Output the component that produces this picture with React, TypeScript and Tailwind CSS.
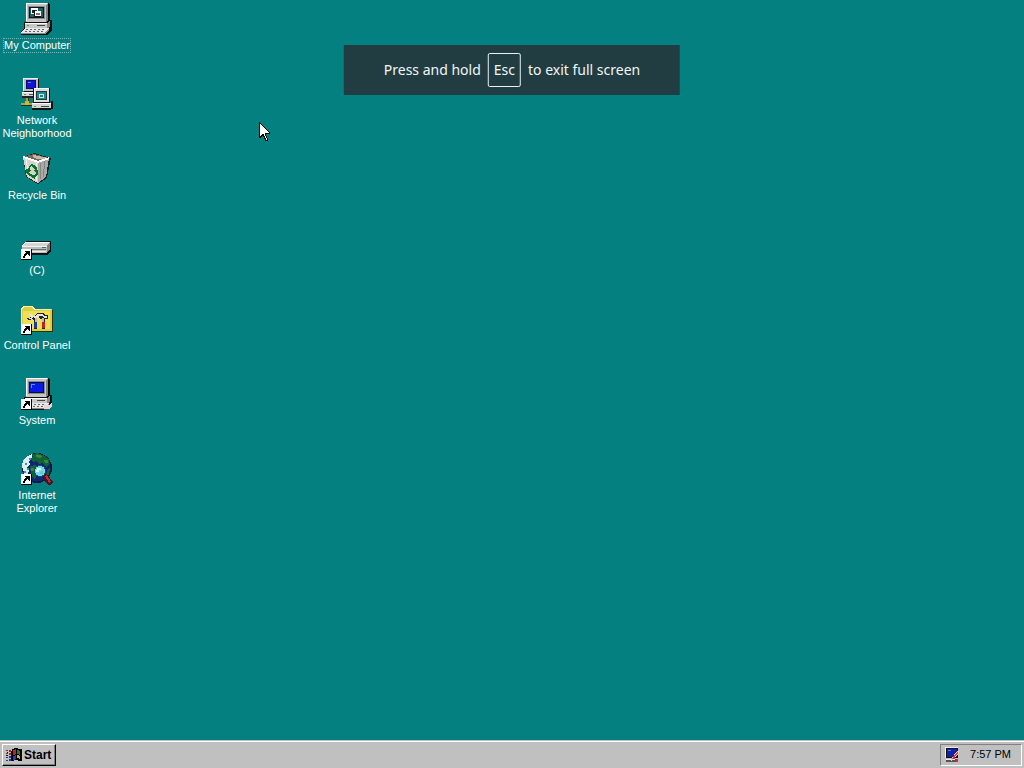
import type { ReactNode } from 'react';

function Sprite({ children }: { children: ReactNode }) {
  return (
    <svg className="size-8 shrink-0" viewBox="0 0 32 32" shapeRendering="crispEdges" aria-hidden="true">
      {children}
    </svg>
  );
}

function ShortcutArrow() {
  return (
    <g>
      <path d="M0 21h11v11H0z" fill="#000" />
      <path d="M0 21h10v10H0z" fill="#fff" />
      <path d="M4 23h5v5H8v-1H7v-1H6v1H5v1H4v2H2v-2h1v-2h1v-1h1v-1H4z" fill="#000" />
    </g>
  );
}

function Workstation({ screen }: { screen: ReactNode }) {
  return (
    <g>
      <path d="M7 0h20l2 1v17l-2 2H6z" fill="#000" />
      <path d="M5 1l2-1h20v17l-2 2H5z" fill="#c6c6c6" />
      <path d="M5 0h21v1H6v17H5z" fill="#fff" />
      <path d="M25 2l2-1v16l-2 2z" fill="#808080" />
      <path d="M7 3h17v13H7z" fill="#8b8b8b" />
      <path d="M8 4h15v11H8z" fill="#0a1226" />
      {screen}
      <path d="M3 19h24l3-2 1 1v7l-3 3H3z" fill="#111" />
      <path d="M4 20h22v5H4z" fill="#c8c8c8" />
      <path d="M4 20h22v1H4z" fill="#fff" />
      <path d="M26 20l3-2v6l-3 2z" fill="#8a8a8a" />
      <path d="M16 22h8v1h-8z" fill="#444" />
      <path d="M6 22h2v1H6z" fill="#42a442" />
      <path d="M3 25h25l3-1v3l-4 5H0v-3z" fill="#111" />
      <path d="M4 25h24l-4 5H0z" fill="#e8e8e8" />
      <path d="M0 30h24l4-5v2l-4 4H0z" fill="#8a8a8a" />
      <path d="M5 26h2v1H5zm4 0h2v1H9zm4 0h2v1h-2zm4 0h2v1h-2zm4 0h2v1h-2zM4 28h2v1H4zm4 0h2v1H8zm4 0h2v1h-2zm4 0h2v1h-2zm4 0h2v1h-2z" fill="#666" />
    </g>
  );
}

function MyComputerIcon() {
  return (
    <Sprite>
      <Workstation
        screen={
          <g>
            <path d="M9 5h13v9H9z" fill="#1b6060" />
            <path d="M10 5h7v6h-7z" fill="#fff" />
            <path d="M11 7h5v3h-5z" fill="#222" />
            <path d="M13 8h7v6h-7z" fill="#111" />
            <path d="M14 8h6v5h-6z" fill="#fff" />
            <path d="M15 10h4v2h-4z" fill="#777" />
          </g>
        }
      />
    </Sprite>
  );
}

function NetworkIcon() {
  return (
    <Sprite>
      <path d="M2 0h15v13H2z" fill="#eee" />
      <path d="M17 1h1v13H3v-1h14z" fill="#111" />
      <path d="M3 1h14v12H3z" fill="#bbb" />
      <path d="M5 2h10v9H5z" fill="#071060" />
      <path d="M6 3h8v7H6z" fill="#1212dc" />
      <path d="M7 4h3v1H7z" fill="#7277ff" />
      <path d="M1 14h17v5H1z" fill="#d8d8d8" />
      <path d="M1 14h17v1H1z" fill="#fff" />
      <path d="M1 18h17v2H1zM18 12h1v7h-1z" fill="#222" />
      <path d="M3 16h2v1H3z" fill="#43a543" />
      <path d="M8 16h5v1H8z" fill="#555" />
      <path d="M5 20h2v5h6v2H0v-2h5z" fill="#ada542" />
      <path d="M0 27h13v1H0zM7 20h1v5H7z" fill="#302b10" />
      <path d="M4 23h4v4H4z" fill="#c5bb43" />
      <path d="M12 10h17v15H12z" fill="#111" />
      <path d="M13 10h15v14H13z" fill="#ddd" />
      <path d="M13 10h15v1H14v13h-1z" fill="#fff" />
      <path d="M15 13h11v9H15z" fill="#28363a" />
      <path d="M16 14h9v7h-9z" fill="#188c8c" />
      <path d="M18 16h5v4h-5z" fill="#d0e5e5" />
      <path d="M19 17h3v2h-3z" fill="#257b7b" />
      <path d="M11 25h19v6H11z" fill="#d5d5d5" />
      <path d="M11 25h19v1H11z" fill="#fff" />
      <path d="M11 30h19v2H11zM30 23h2v8h-2z" fill="#111" />
      <path d="M20 28h8v1h-8z" fill="#444" />
      <path d="M13 28h2v1h-2z" fill="#43a543" />
    </Sprite>
  );
}

function RecycleIcon() {
  return (
    <Sprite>
      <path d="M2 4L13 0l17 5-4 20-9 6L5 24z" fill="#222" />
      <path d="M2 4l11-3 15 4-11 4z" fill="#76685c" />
      <path d="M12 2l1 3 9 2 6-2z" fill="#c4b9a4" />
      <path d="M2 4l15 5v21L6 24z" fill="#d3d3cf" />
      <path d="M17 9l11-4-3 19-8 6z" fill="#a9a9a7" />
      <path d="M2 3l15 5 11-4v2l-11 4L2 5z" fill="#fff" />
      <path d="M5 6l3 17M15 10l1 18" stroke="#f2f2ed" fill="none" />
      <path d="M20 10l-1 16M24 8l-2 16" stroke="#858585" fill="none" />
      <path d="M7 14l3-3 4 1 2 3-2 2-2-3-2-1-1 2zM14 16l3 1v5l-3 1 1-3-2-2zM5 16l4-1 1 3-2 1 2 3-1 2-4-4zM10 21l5 2-1 3-3-1-2-2z" fill="#087424" />
    </Sprite>
  );
}

function DriveIcon() {
  return (
    <Sprite>
      <path d="M5 13h24l1 1v9l-3 4H1v-8z" fill="#111" />
      <path d="M4 14h25l-3 4H1z" fill="#d5d5d5" />
      <path d="M4 14h24v1H4l-3 3v7H1v-8z" fill="#fff" />
      <path d="M1 18h25v7H1z" fill="#bcbcbc" />
      <path d="M1 18h25v1H1z" fill="#f3f3f3" />
      <path d="M26 18l3-4v7l-3 4z" fill="#848484" />
      <path d="M11 21h14v1H11z" fill="#6e6e6e" />
      <path d="M11 23h14v1H11z" fill="#eee" />
      <path d="M21 19h4v1h-4z" fill="#2f7c3f" />
      <ShortcutArrow />
    </Sprite>
  );
}

function ControlPanelIcon() {
  return (
    <Sprite>
      <path d="M2 4h10l3 3h17v22H2z" fill="#33300e" />
      <path d="M0 5l2-2h9l3 3h17v22H0z" fill="#dccc43" />
      <path d="M0 5l2-2h9l3 3h16v1H13l-3-3H3L1 6v21H0z" fill="#fff4a4" />
      <path d="M2 8h27v18H2z" fill="#efdf58" />
      <path d="M7 11h3l2 2h2l2-3h6l3 2h2v4h-3v10h-3V16h-2l-2-2-1 3v9h-3v-8l-2-3-2 2H7l-1-2h3v-2z" fill="#222" />
      <path d="M8 11h2l2 2h2l2-2h5l2 2h3v2h-3l-1-2h-3l-3 2h-3l-1-1-2 2H8v-1h2z" fill="#e4e4e4" />
      <path d="M14 15h2v5h-2zM21 15h2v5h-2z" fill="#bbb" />
      <path d="M13 19h3v6h-3z" fill="#203c9b" />
      <path d="M21 19h3v6h-3z" fill="#bd2025" />
      <ShortcutArrow />
    </Sprite>
  );
}

function SystemIcon() {
  return (
    <Sprite>
      <Workstation
        screen={
          <g>
            <path d="M9 5h13v9H9z" fill="#0919e6" />
            <path d="M10 6h4v1h-4zM10 7h1v3h-1z" fill="#7582ff" />
          </g>
        }
      />
      <path d="M23 27h6l2-3v4l-3 3h-5z" fill="#e7d6d9" />
      <path d="M23 31h5l3-3v1l-3 3h-5z" fill="#555" />
      <ShortcutArrow />
    </Sprite>
  );
}

function ExplorerIcon() {
  return (
    <Sprite>
      <circle cx="16" cy="15" r="15" fill="#111b42" />
      <circle cx="15.5" cy="14.5" r="14" fill="#102577" />
      <path d="M5 4l6-3v4l-3 3 1 3-3 3 2 4-2 6-3-4-2-7 1-5z" fill="#d9edf5" />
      <path d="M8 5h2v2H8zM4 10h2v2H4zM6 15h2v2H6zM3 18h2v2H3z" fill="#4a91a8" />
      <path d="M11 1l6-1 7 3 4 4v5l-3 2-3-4-4 1-2-3-4 1-3-3 3-2zM9 13l5-1 4 3-2 6-2 6-4-4zM26 17l3-2-1 6-3 3z" fill="#126132" />
      <path d="M16 1l5 2-2 2-4-1zM23 7h4v3h-3zM10 15h3v3h-3z" fill="#348b3b" />
      <path d="M22 23l4-2 6 8-3 3h-2l-5-7z" fill="#421520" />
      <path d="M24 23l2-1 4 7-2 1z" fill="#c72634" />
      <circle cx="19" cy="18" r="6" fill="#194c67" />
      <circle cx="19" cy="18" r="5" fill="#78d9e8" />
      <path d="M16 15h4v2h-2v2h-3z" fill="#d5ffff" />
      <path d="M20 18h2v3h-3z" fill="#65c7d6" />
      <ShortcutArrow />
    </Sprite>
  );
}

function WindowsFlag() {
  return (
    <svg className="h-4 w-4 shrink-0" viewBox="0 0 16 16" shapeRendering="crispEdges" aria-hidden="true">
      <path d="M6 2l4-1 3 1h3v12h-3l-3-1-4 1z" fill="#000" />
      <path d="M7 3l3-1v5L7 8z" fill="#b92832" />
      <path d="M11 3l3 1v4l-3-1z" fill="#237b3a" />
      <path d="M7 9l3-1v4l-3 1z" fill="#2142b8" />
      <path d="M11 8l3 1v3l-3-1z" fill="#c5b53c" />
      <path d="M0 3h2v1H0zM3 3h2v2H3zM0 6h2v1H0zM3 6h2v2H3z" fill="#a92338" />
      <path d="M1 5h1v1H1zM0 8h2v1H0zM5 4h1v10H5z" fill="#111" />
      <path d="M0 10h2v1H0zM3 9h2v2H3zM0 13h2v1H0zM3 12h2v2H3z" fill="#253797" />
    </svg>
  );
}

function TrayIcon() {
  return (
    <svg className="size-4 shrink-0" viewBox="0 0 16 16" shapeRendering="crispEdges" aria-hidden="true">
      <path d="M1 0h13v11H1z" fill="#eee" />
      <path d="M2 1h12v10H2z" fill="#111" />
      <path d="M3 2h10v8H3z" fill="#1221a9" />
      <path d="M4 3h3v1H4z" fill="#6577e5" />
      <path d="M2 12h12v3H2z" fill="#555" />
      <path d="M2 12h9v1H2z" fill="#eee" />
      <path d="M13 4h2v2l-5 6-3 2 1-3z" fill="#f0d1b5" />
      <path d="M13 5h1v1l-4 5-2 1 1-2z" fill="#d44245" />
      <path d="M9 10h2v2H9zM12 12h2v3h-2z" fill="#ca3037" />
    </svg>
  );
}

const shortcuts = [
  { label: 'My Computer', icon: <MyComputerIcon />, selected: true },
  { label: 'Network Neighborhood', icon: <NetworkIcon /> },
  { label: 'Recycle Bin', icon: <RecycleIcon /> },
  { label: '(C)', icon: <DriveIcon /> },
  { label: 'Control Panel', icon: <ControlPanelIcon /> },
  { label: 'System', icon: <SystemIcon /> },
  { label: 'Internet Explorer', icon: <ExplorerIcon /> },
];

export default function App() {
  return (
    <div className="relative flex min-h-screen cursor-default flex-col overflow-hidden bg-[#048080] font-['Liberation_Sans',sans-serif]">
      <main className="flex-1 pt-[3px]">
        <nav aria-label="Desktop" className="flex w-[74px] flex-col">
          {shortcuts.map(({ label, icon, selected }) => (
            <button
              key={label}
              type="button"
              className="flex h-[75px] w-full flex-col items-center gap-1 text-[11px] leading-[13px] text-white"
            >
              {icon}
              <span className={selected ? 'whitespace-nowrap outline-1 outline-dotted outline-[#79b5b5]' : ''}>{label}</span>
            </button>
          ))}
        </nav>
      </main>

      <div
        role="status"
        className="absolute top-[45px] left-1/2 flex h-[50px] -translate-x-1/2 items-center gap-[7px] bg-[#223d42] px-10 font-['Noto_Sans',sans-serif] text-sm whitespace-nowrap text-[#f0f7f8]"
      >
        <span>Press and hold</span>
        <kbd className="rounded-xs border border-[#e8f3f4] px-[5px] py-1.5 font-['Noto_Sans',sans-serif]">Esc</kbd>
        <span>to exit full screen</span>
      </div>

      <svg
        className="absolute top-[122px] left-[259px] h-5 w-3"
        viewBox="0 0 12 20"
        shapeRendering="crispEdges"
        aria-hidden="true"
      >
        <path d="M0 0h1v1h1v1h1v1h1v1h1v1h1v1h1v1h1v1h1v1h1v1h1v2H7v2h1v2h1v3H6v-2H5v-2H4v-1H3v1H2v1H0z" fill="#000" />
        <path d="M1 2h1v1h1v1h1v1h1v1h1v1h1v1h1v1h1v1h1v1H6v3h1v2h1v2H7v-2H6v-2H5v-2H3v1H2v1H1z" fill="#fff" />
      </svg>

      <footer className="flex h-7 shrink-0 items-center justify-between border-t border-[#c0c0c0] bg-[#c0c0c0] px-0.5 shadow-[inset_0_1px_0_#fff]">
        <button
          type="button"
          className="flex h-[22px] items-center gap-0.5 border border-t-white border-r-black border-b-black border-l-white pr-1 pl-[3px] text-xs font-bold text-black shadow-[inset_-1px_-1px_0_#808080]"
        >
          <WindowsFlag />
          <span>Start</span>
        </button>
        <div className="flex h-[22px] items-center gap-2.5 border border-t-[#808080] border-r-white border-b-white border-l-[#808080] pr-2.5 pl-[3px] text-[11px] text-black">
          <TrayIcon />
          <time dateTime="19:57">7:57 PM</time>
        </div>
      </footer>
    </div>
  );
}
